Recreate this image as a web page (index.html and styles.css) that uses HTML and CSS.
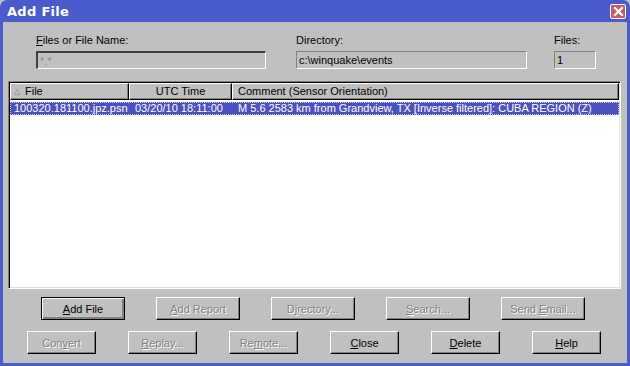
FILE: index.html
```html
<!DOCTYPE html>
<html lang="en">
<head>
<meta charset="UTF-8">
<title>Add File</title>
<link rel="stylesheet" href="styles.css">
</head>
<body>
<div class="window">
    <div class="titlebar">
        <span class="title">Add File</span>
        <span class="close-btn">
            <svg width="11" height="11" viewBox="0 0 11 11"><path d="M2 2 L9 9 M9 2 L2 9" stroke="#fff" stroke-width="2.2" stroke-linecap="square"/></svg>
        </span>
    </div>

    <div class="client">
        <div class="fields">
            <div class="field f-name">
                <label><u>F</u>iles or File Name:</label>
                <div class="edit sunken disabled">*.*</div>
            </div>
            <div class="field f-dir">
                <label>Directory:</label>
                <div class="edit flat">c:\winquake\events</div>
            </div>
            <div class="field f-count">
                <label>Files:</label>
                <div class="edit flat">1</div>
            </div>
        </div>

        <div class="listbox">
            <div class="list-head">
                <div class="col c-file"><span class="sort">&#9651;</span>File</div>
                <div class="col c-time">UTC Time</div>
                <div class="col c-comment">Comment (Sensor Orientation)</div>
            </div>
            <div class="list-row selected">
                <span class="cell c-file">100320.181100.jpz.psn</span>
                <span class="cell c-time">03/20/10 18:11:00</span>
                <span class="cell c-comment">M 5.6 2583 km from Grandview, TX [Inverse filtered]: CUBA REGION (Z)</span>
            </div>
        </div>

        <div class="btn-row row-1">
            <button class="btn default"><u>A</u>dd File</button>
            <button class="btn off"><u>A</u>dd Report</button>
            <button class="btn off">D<u>i</u>rectory...</button>
            <button class="btn off"><u>S</u>earch...</button>
            <button class="btn off">Send <u>E</u>mail...</button>
        </div>
        <div class="btn-row row-2">
            <button class="btn off">Con<u>v</u>ert</button>
            <button class="btn off"><u>R</u>eplay...</button>
            <button class="btn off">Re<u>m</u>ote...</button>
            <button class="btn"><u>C</u>lose</button>
            <button class="btn"><u>D</u>elete</button>
            <button class="btn"><u>H</u>elp</button>
        </div>
    </div>
</div>
</body>
</html>
```
FILE: styles.css
```css
body {
    margin: 0;
    width: 630px;
    height: 366px;
    overflow: hidden;
    font-family: "Liberation Sans", Arial, sans-serif;
    font-size: 11px;
    background: #c0c0c0;
}

.window {
    height: 366px;
    display: flex;
    flex-direction: column;
    background: #4a5bcb;
    border-radius: 7px 7px 0 0;
    padding: 0 3px 3px 3px;
    box-sizing: border-box;
}

.titlebar {
    height: 22px;
    display: flex;
    align-items: center;
    justify-content: space-between;
    padding: 0 1px 0 4px;
    flex-shrink: 0;
}

.title {
    color: #fff;
    font-weight: bold;
    font-size: 13px;
    font-family: "DejaVu Sans", sans-serif;
    letter-spacing: 0.3px;
}

.close-btn {
    width: 14px;
    height: 13px;
    background: #c45a6c;
    border: 1px solid #fff;
    border-radius: 2px;
    display: flex;
    align-items: center;
    justify-content: center;
    margin-top: 1px;
}

.client {
    flex: 1;
    background: #c0c0c0;
    display: flex;
    flex-direction: column;
}

.fields {
    display: flex;
    padding: 11px 0 0 33px;
}

.field {
    display: flex;
    flex-direction: column;
}

.field label {
    height: 15px;
    line-height: 15px;
    color: #000;
    margin-bottom: 3px;
}

.f-name { width: 230px; margin-right: 30px; }
.f-dir { width: 231px; margin-right: 27px; }
.f-count { width: 42px; }

.edit {
    height: 18px;
    line-height: 16px;
    box-sizing: border-box;
    padding-left: 2px;
    color: #000;
}

.edit.sunken {
    border-top: 2px solid #404040;
    border-left: 2px solid #404040;
    border-right: 1px solid #fff;
    border-bottom: 1px solid #fff;
}

.edit.flat {
    border-top: 1px solid #808080;
    border-left: 1px solid #808080;
    border-right: 1px solid #fff;
    border-bottom: 1px solid #fff;
}

.edit.disabled {
    color: #888;
}

.listbox {
    margin: 12px 6px 0 5px;
    height: 208px;
    background: #fff;
    box-sizing: border-box;
    border-top: 1px solid #808080;
    border-left: 1px solid #808080;
    border-right: 1px solid #fff;
    border-bottom: 1px solid #fff;
    box-shadow: inset 1px 1px 0 #000, inset -1px -1px 0 #dfdfdf;
    padding: 1px;
}

.list-head {
    display: flex;
    height: 17px;
}

.col {
    height: 17px;
    line-height: 15px;
    box-sizing: border-box;
    background: #c0c0c0;
    border-top: 1px solid #fff;
    border-left: 1px solid #fff;
    border-right: 1px solid #000;
    border-bottom: 1px solid #000;
    box-shadow: inset -1px -1px 0 #808080;
    white-space: nowrap;
    overflow: hidden;
}

.list-head .c-file { width: 119px; padding-left: 3px; }
.list-head .c-time { width: 103px; text-align: center; }
.list-head .c-comment { flex: 1; padding-left: 5px; }

.sort {
    color: #808080;
    font-size: 8px;
    margin-right: 5px;
    vertical-align: 1px;
}

.list-row {
    display: flex;
    height: 13px;
    line-height: 13px;
    margin-top: 2px;
    white-space: nowrap;
}

.list-row.selected {
    background: #4c50c0;
    color: #fff;
    outline: 1px dotted #c8c8e8;
    outline-offset: -1px;
}

.cell { overflow: hidden; }
.list-row .c-file { width: 121px; padding-left: 4px; }
.list-row .c-time { width: 103px; }
.list-row .c-comment { flex: 1; }

.btn-row {
    display: flex;
}

.row-1 {
    padding: 8px 0 0 38px;
    gap: 31px;
}

.row-1 .btn { width: 84px; }

.row-2 {
    padding: 11px 0 0 24px;
    gap: 32px;
}

.row-2 .btn { width: 69px; }

.btn {
    height: 23px;
    padding: 0;
    box-sizing: border-box;
    background: #c0c0c0;
    font-family: "Liberation Sans", Arial, sans-serif;
    font-size: 11px;
    color: #000;
    border-top: 1px solid #fff;
    border-left: 1px solid #fff;
    border-right: 1px solid #000;
    border-bottom: 1px solid #000;
    box-shadow: inset -1px -1px 0 #808080;
}

.btn.default {
    border: 1px solid #000;
    box-shadow: inset 1px 1px 0 #fff, inset -2px -2px 0 #808080, inset -1px -1px 0 #000;
}

.btn.off {
    color: #808080;
    text-shadow: 1px 1px 0 #fff;
}
```
